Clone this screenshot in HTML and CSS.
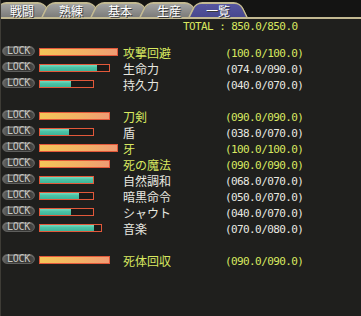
FILE: index.html
```html
<!DOCTYPE html>
<html lang="ja">
<head>
<meta charset="utf-8">
<title>スキル一覧</title>
<link rel="stylesheet" href="styles.css">
</head>
<body>
<div class="window">
  <div class="tabs">
    <div class="tab first">戦闘</div>
    <div class="tab">熟練</div>
    <div class="tab">基本</div>
    <div class="tab">生産</div>
    <div class="tab active">一覧</div>
  </div>
  <div class="total">TOTAL : 850.0/850.0</div>
  <div class="list">
    <div class="row max"><span class="lock">LOCK</span><span class="barcell"><span class="bar" style="width:79px"><span class="fill" style="width:77px"></span></span></span><span class="name">攻撃回避</span><span class="val">(100.0/100.0)</span></div>
    <div class="row"><span class="lock">LOCK</span><span class="barcell"><span class="bar" style="width:71px"><span class="fill" style="width:57px"></span></span></span><span class="name">生命力</span><span class="val">(074.0/090.0)</span></div>
    <div class="row"><span class="lock">LOCK</span><span class="barcell"><span class="bar" style="width:55px"><span class="fill" style="width:31px"></span></span></span><span class="name">持久力</span><span class="val">(040.0/070.0)</span></div>
    <div class="row empty"></div>
    <div class="row max"><span class="lock">LOCK</span><span class="barcell"><span class="bar" style="width:71px"><span class="fill" style="width:69px"></span></span></span><span class="name">刀剣</span><span class="val">(090.0/090.0)</span></div>
    <div class="row"><span class="lock">LOCK</span><span class="barcell"><span class="bar" style="width:55px"><span class="fill" style="width:29px"></span></span></span><span class="name">盾</span><span class="val">(038.0/070.0)</span></div>
    <div class="row max"><span class="lock">LOCK</span><span class="barcell"><span class="bar" style="width:79px"><span class="fill" style="width:77px"></span></span></span><span class="name">牙</span><span class="val">(100.0/100.0)</span></div>
    <div class="row max"><span class="lock">LOCK</span><span class="barcell"><span class="bar" style="width:71px"><span class="fill" style="width:69px"></span></span></span><span class="name">死の魔法</span><span class="val">(090.0/090.0)</span></div>
    <div class="row"><span class="lock">LOCK</span><span class="barcell"><span class="bar" style="width:55px"><span class="fill" style="width:53px"></span></span></span><span class="name">自然調和</span><span class="val">(068.0/070.0)</span></div>
    <div class="row"><span class="lock">LOCK</span><span class="barcell"><span class="bar" style="width:55px"><span class="fill" style="width:39px"></span></span></span><span class="name">暗黒命令</span><span class="val">(050.0/070.0)</span></div>
    <div class="row"><span class="lock">LOCK</span><span class="barcell"><span class="bar" style="width:55px"><span class="fill" style="width:31px"></span></span></span><span class="name">シャウト</span><span class="val">(040.0/070.0)</span></div>
    <div class="row"><span class="lock">LOCK</span><span class="barcell"><span class="bar" style="width:63px"><span class="fill" style="width:54px"></span></span></span><span class="name">音楽</span><span class="val">(070.0/080.0)</span></div>
    <div class="row empty"></div>
    <div class="row max"><span class="lock">LOCK</span><span class="barcell"><span class="bar" style="width:71px"><span class="fill" style="width:69px"></span></span></span><span class="name">死体回収</span><span class="val">(090.0/090.0)</span></div>
  </div>
</div>
</body>
</html>
```

FILE: styles.css
```css
html, body {
  margin: 0;
  padding: 0;
  background: #1e1e1c;
}

.window {
  width: 361px;
  height: 316px;
  overflow: hidden;
  box-sizing: border-box;
  border-left: 1px solid #3e3c36;
  background: #1f1f1d;
  font-family: "Noto Sans CJK JP", sans-serif;
  color: #e8e8e0;
}

.tabs {
  display: flex;
  height: 15px;
  padding-top: 2px;
  background: #141413;
  border-bottom: 2px solid #c2b992;
  margin-left: -1px;
}

.tab {
  position: relative;
  z-index: 1;
  flex: none;
  width: 60px;
  height: 15px;
  margin-left: -11px;
  text-align: center;
  font-size: 12px;
  line-height: 17px;
  color: #ffffff;
  text-shadow: 1px 1px 0 #3a3a3a;
}

.tab.first {
  margin-left: -8px;
}

.tab::before,
.tab::after {
  content: "";
  position: absolute;
  z-index: -1;
  top: 0;
  bottom: 0;
  width: 60%;
  box-sizing: border-box;
  border: 2px solid #c2b992;
  border-bottom: 0;
  background: linear-gradient(#a2a2a0, #7c7c7a);
}

.tab::before {
  left: 0;
  border-right: 0;
  border-radius: 7px 0 0 0;
  transform: skewX(-26deg);
  transform-origin: bottom left;
}

.tab::after {
  right: 0;
  border-left: 0;
  border-radius: 0 7px 0 0;
  transform: skewX(26deg);
  transform-origin: bottom right;
}

.tab.active::before,
.tab.active::after {
  background: linear-gradient(#5656a0, #48488e);
}

.total {
  height: 12px;
  padding-top: 2px;
  padding-left: 182px;
  font-family: "DejaVu Sans Mono", monospace;
  font-size: 11px;
  letter-spacing: -0.6px;
  line-height: 12px;
  color: #d8e860;
  white-space: pre;
}

.list {
  margin-top: 12px;
}

.row {
  display: flex;
  align-items: flex-start;
  height: 16px;
}

.lock {
  flex: none;
  box-sizing: border-box;
  width: 33px;
  height: 10px;
  margin: 1px 0 0 1px;
  border: 1px solid #5e5e5c;
  border-radius: 5px;
  background: linear-gradient(90deg, #6a6a68, #3a3a38 25%, #363634 80%, #4e4e4c);
  box-shadow: inset 0 1px 0 #7a7a78;
  font-family: "DejaVu Sans Mono", monospace;
  font-size: 10px;
  line-height: 8px;
  text-align: center;
  color: #c8c8c2;
  letter-spacing: -0.3px;
}

.barcell {
  flex: none;
  width: 84px;
  margin-left: 4px;
  padding-top: 3px;
}

.bar {
  display: block;
  box-sizing: border-box;
  height: 8px;
  border: 1px solid #e2583a;
  background: #1a1a18;
}

.fill {
  display: block;
  height: 6px;
  background: linear-gradient(#78dcc0, #4cc4a6 40%, #3cb498);
}

.row.max .fill {
  background: linear-gradient(90deg, #f4c658, #f2b066 60%, #f09c74);
}

.name {
  flex: none;
  width: 102px;
  font-size: 12px;
  line-height: 16px;
}

.val {
  flex: none;
  padding-top: 1px;
  font-family: "DejaVu Sans Mono", monospace;
  font-size: 11px;
  line-height: 16px;
  letter-spacing: -0.6px;
}

.row.max .name,
.row.max .val {
  color: #d8e860;
}
```
